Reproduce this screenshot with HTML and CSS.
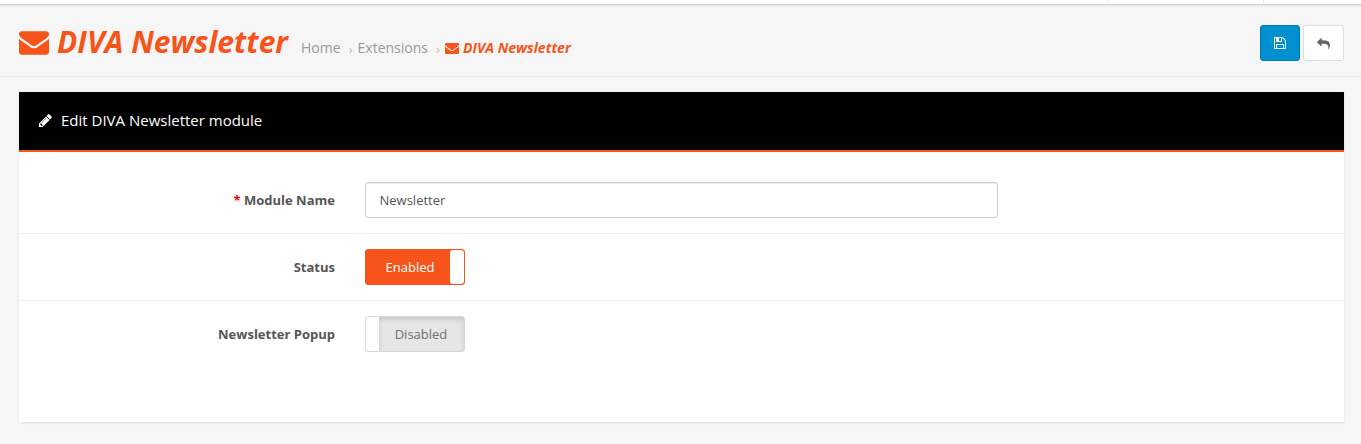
FILE: index.html
```
<!DOCTYPE html>
<html lang="en">
<head>
<meta charset="utf-8">
<title>DIVA Newsletter</title>
<link rel="stylesheet" href="styles.css">
</head>
<body>
<svg class="defs" aria-hidden="true">
<symbol id="envelope" viewBox="0 0 1792 1408"><path d="M1792 454v794q0 66-47 113t-113 47H160q-66 0-113-47T0 1248V454q44 49 101 87 362 246 497 345 57 42 92.500 65.500t94.500 48 110 24.500h2q51 0 110-24.500t94.500-48T1194 886q170-123 498-345 57-39 100-87zm0-294q0 79-49 151t-122 123q-376 261-468 325-10 7-42.500 30.500t-54 38-52 32.500-57.500 27-50 9h-2q-23 0-50-9t-57.500-27-52-32.500-54-38T639 759q-91-64-262-182.500T172 434q-62-42-117-115.500T0 182q0-78 41.500-130T160 0h1472q65 0 112.500 47t47.500 113z"/></symbol>
</svg>
<header class="topbar"><span class="topcell"></span><span class="topcell last"></span></header>
<div class="page-header">
  <h1><svg class="mail"><use href="#envelope"/></svg>DIVA Newsletter</h1>
  <nav class="crumbs"><a>Home</a><i>›</i><a>Extensions</a><i>›</i><b><svg class="mail-small"><use href="#envelope"/></svg>DIVA Newsletter</b></nav>
  <div class="actions">
    <button class="btn save" aria-label="Save"><svg width="12" height="12" viewBox="0 0 1536 1536"><path d="M384 1408h768v-384H384v384zm896 0h128V512q0-14-10-38.500t-20-34.500l-281-281q-10-10-34-20t-39-10v416q0 40-28 68t-68 28H352q-40 0-68-28t-28-68V128H128v1280h128V992q0-40 28-68t68-28h832q40 0 68 28t28 68v416zM896 480V160q0-13-9.500-22.500T864 128H672q-13 0-22.500 9.500T640 160v320q0 13 9.500 22.500T672 512h192q13 0 22.500-9.500T896 480zm640 32v928q0 40-28 68t-68 28H96q-40 0-68-28t-28-68V96q0-40 28-68T96 0h928q40 0 88 20t76 48l280 280q28 28 48 76t20 88z"/></svg></button>
    <button class="btn back" aria-label="Back"><svg width="13" height="11" viewBox="0 0 1792 1536"><path d="M1792 1024q0 166-127 451-3 7-10.500 24t-13.500 30-13 22q-12 17-28 17-15 0-23.500-10t-8.500-25q0-9 2.500-26.500t2.500-23.500q5-68 5-123 0-101-17.500-181t-48.500-138.500-80-101-105.500-69.500-133-42.500-154-21.500-175.500-6H640v256q0 26-19 45t-45 19-45-19L19 621Q0 602 0 576t19-45L531 19q19-19 45-19t45 19 19 45v256h224q713 0 875 403 53 134 53 301z"/></svg></button>
  </div>
</div>
<main class="panel">
  <div class="panel-heading"><svg width="13" height="13" viewBox="0 0 1536 1536"><path d="M363 1408l91-91-235-235-91 91v107h128v128h107zm523-928q0-22-22-22-10 0-17 7l-542 542q-7 7-7 17 0 22 22 22 10 0 17-7l542-542q7-7 7-17zm-54-192l416 416-832 832H0v-416zm683 96q0 53-37 90l-166 166-416-416 166-165q36-38 90-38 53 0 91 38l235 234q37 39 37 91z"/></svg><span>Edit DIVA Newsletter module</span></div>
  <form class="form">
    <div class="row"><label><em>*</em> Module Name</label><input class="text" value="Newsletter"></div>
    <div class="row"><label>Status</label><div class="toggle on"><span>Enabled</span><i></i></div></div>
    <div class="row"><label>Newsletter Popup</label><div class="toggle off"><i></i><span>Disabled</span></div></div>
  </form>
</main>
</body>
</html>
```
FILE: styles.css
```
* { box-sizing: border-box; }
body { margin: 0; height: 444px; overflow: hidden; background: #f6f6f6; color: #555; font: 13px/20px "Open Sans", sans-serif; }
.defs { position: absolute; width: 0; height: 0; }
svg { fill: currentColor; overflow: visible; flex: none; }
.topbar { height: 5px; background: #fff; border-bottom: 1px solid #d5d5d5; box-shadow: 0 1px 2px #ddd; display: flex; justify-content: flex-end; }
.topcell { width: 156px; border-left: 1px solid #e7e7e7; }
.topcell.last { width: 98px; }
.page-header { height: 72px; border-bottom: 1px solid #e7e7e7; padding: 0 17px 0 19px; display: flex; }
h1 { margin: 17px 0 0; font: italic 700 30px/40px "Open Sans", sans-serif; color: #f6541a; display: flex; white-space: nowrap; }
.mail { width: 30px; height: 24px; margin: 9px 8px 0 0; }
.crumbs { margin: 33px 0 0 13px; font-size: 14px; color: #999; display: flex; white-space: nowrap; }
.crumbs i { font-style: normal; font-size: 13px; width: 17px; text-align: center; padding-left: 3px; color: #bbb; padding-top: 1px; }
.crumbs b { color: #f6541a; font-style: italic; font-weight: 700; display: flex; }
.mail-small { width: 14px; height: 11px; margin: 5px 4px 0 0; }
.actions { margin: 20px 0 0 auto; display: flex; gap: 3px; }
.btn { width: 41px; height: 36px; padding: 0; border: 1px solid #ddd; border-radius: 3px; background: #fff; color: #666; display: grid; place-items: center; }
.btn.save { width: 40px; background: #0090d0; border-color: #007ab0; color: #fff; }
.panel { margin: 15px 17px 0 19px; height: 330px; background: #fff; box-shadow: 0 1px 2px #ddd; }
.panel-heading { height: 60px; background: #000; border-bottom: 2px solid #f6541a; color: #fff; font-size: 15px; display: flex; align-items: center; padding: 0 20px 2px; gap: 9px; }
.form { padding-top: 15px; }
.row { height: 67px; display: flex; align-items: flex-start; padding-top: 15px; border-bottom: 1px solid #ededed; }
.row:last-child { border: 0; }
.row label { width: 316px; margin-right: 30px; padding-top: 8px; text-align: right; font-weight: 700; color: #555; }
.row em { color: #f00; font-style: normal; }
.text { width: 633px; height: 36px; padding: 0 13.5px; border: 1px solid #ccc; border-radius: 3px; background: #fff; font: inherit; color: #555; box-shadow: inset 0 1px 1px rgba(0,0,0,.075); }
.toggle { width: 100px; height: 36px; border: 1px solid #f6541a; border-radius: 3px; display: flex; overflow: hidden; line-height: 34px; text-align: center; }
.toggle span { flex: 1; }
.toggle i { width: 14px; background: #fff; border-radius: 3px; }
.on { background: #f6541a; color: #fff; }
.on span { padding-left: 4px; }
.off { border-color: #d8d8d8; background: #e6e6e6; color: #707070; }
.off i { width: 13px; border-radius: 2px 0 0 2px; }
.off span { padding-right: 1px; box-shadow: inset 0 3px 5px rgba(0,0,0,.125); }
```
